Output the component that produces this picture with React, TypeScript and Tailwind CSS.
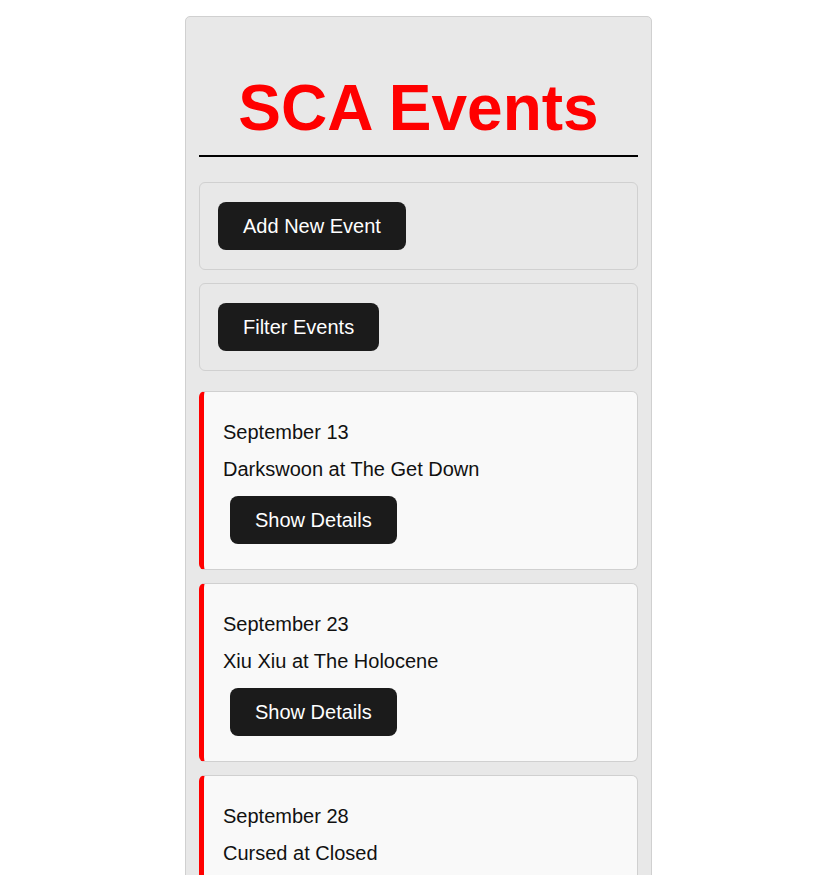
import React from "react";

const events = [
  { date: "September 13", title: "Darkswoon at The Get Down" },
  { date: "September 23", title: "Xiu Xiu at The Holocene" },
  { date: "September 28", title: "Cursed at Closed" },
];

const btn =
  "h-[48px] rounded-[8px] bg-[#1b1b1b] px-[25px] text-[20px] leading-[23px] text-white";

const EventCard = ({ date, title }: { date: string; title: string }) => {
  return (
    <div className="rounded-[6px] border border-[#d0d0d0] border-l-[5px] border-l-[#ff0000] bg-[#f9f9f9] pt-[29px] pb-[25px] pl-[19px] pr-[19px]">
      <p className="text-[20px] leading-[23px] text-[#111]">{date}</p>
      <p className="mt-[14px] text-[20px] leading-[23px] text-[#111]">{title}</p>
      <button className={btn + " mt-[15px] ml-[7px]"}>Show Details</button>
    </div>
  );
};

export default function App() {
  return (
    <div className="min-h-screen bg-white pt-[16px] pl-[185px] font-['Liberation_Sans',Arial,sans-serif]">
      <div className="w-[467px] rounded-[5px] border border-[#d0d0d0] bg-[#e8e8e8] px-[13px] pb-[14px]">
        <h1 className="mt-[54px] text-center text-[64px] font-bold leading-[74px] text-[#ff0000]">
          SCA Events
        </h1>
        <div className="mt-[10px] h-[2px] bg-black"></div>

        <div className="mt-[25px] rounded-[6px] border border-[#d0d0d0] px-[18px] py-[19px]">
          <button className={btn}>Add New Event</button>
        </div>
        <div className="mt-[13px] rounded-[6px] border border-[#d0d0d0] px-[18px] py-[19px]">
          <button className={btn}>Filter Events</button>
        </div>

        <div className="mt-[20px] flex flex-col gap-[13px]">
          {events.map((ev, i) => (
            <EventCard key={i} date={ev.date} title={ev.title} />
          ))}
        </div>
      </div>
    </div>
  );
}
